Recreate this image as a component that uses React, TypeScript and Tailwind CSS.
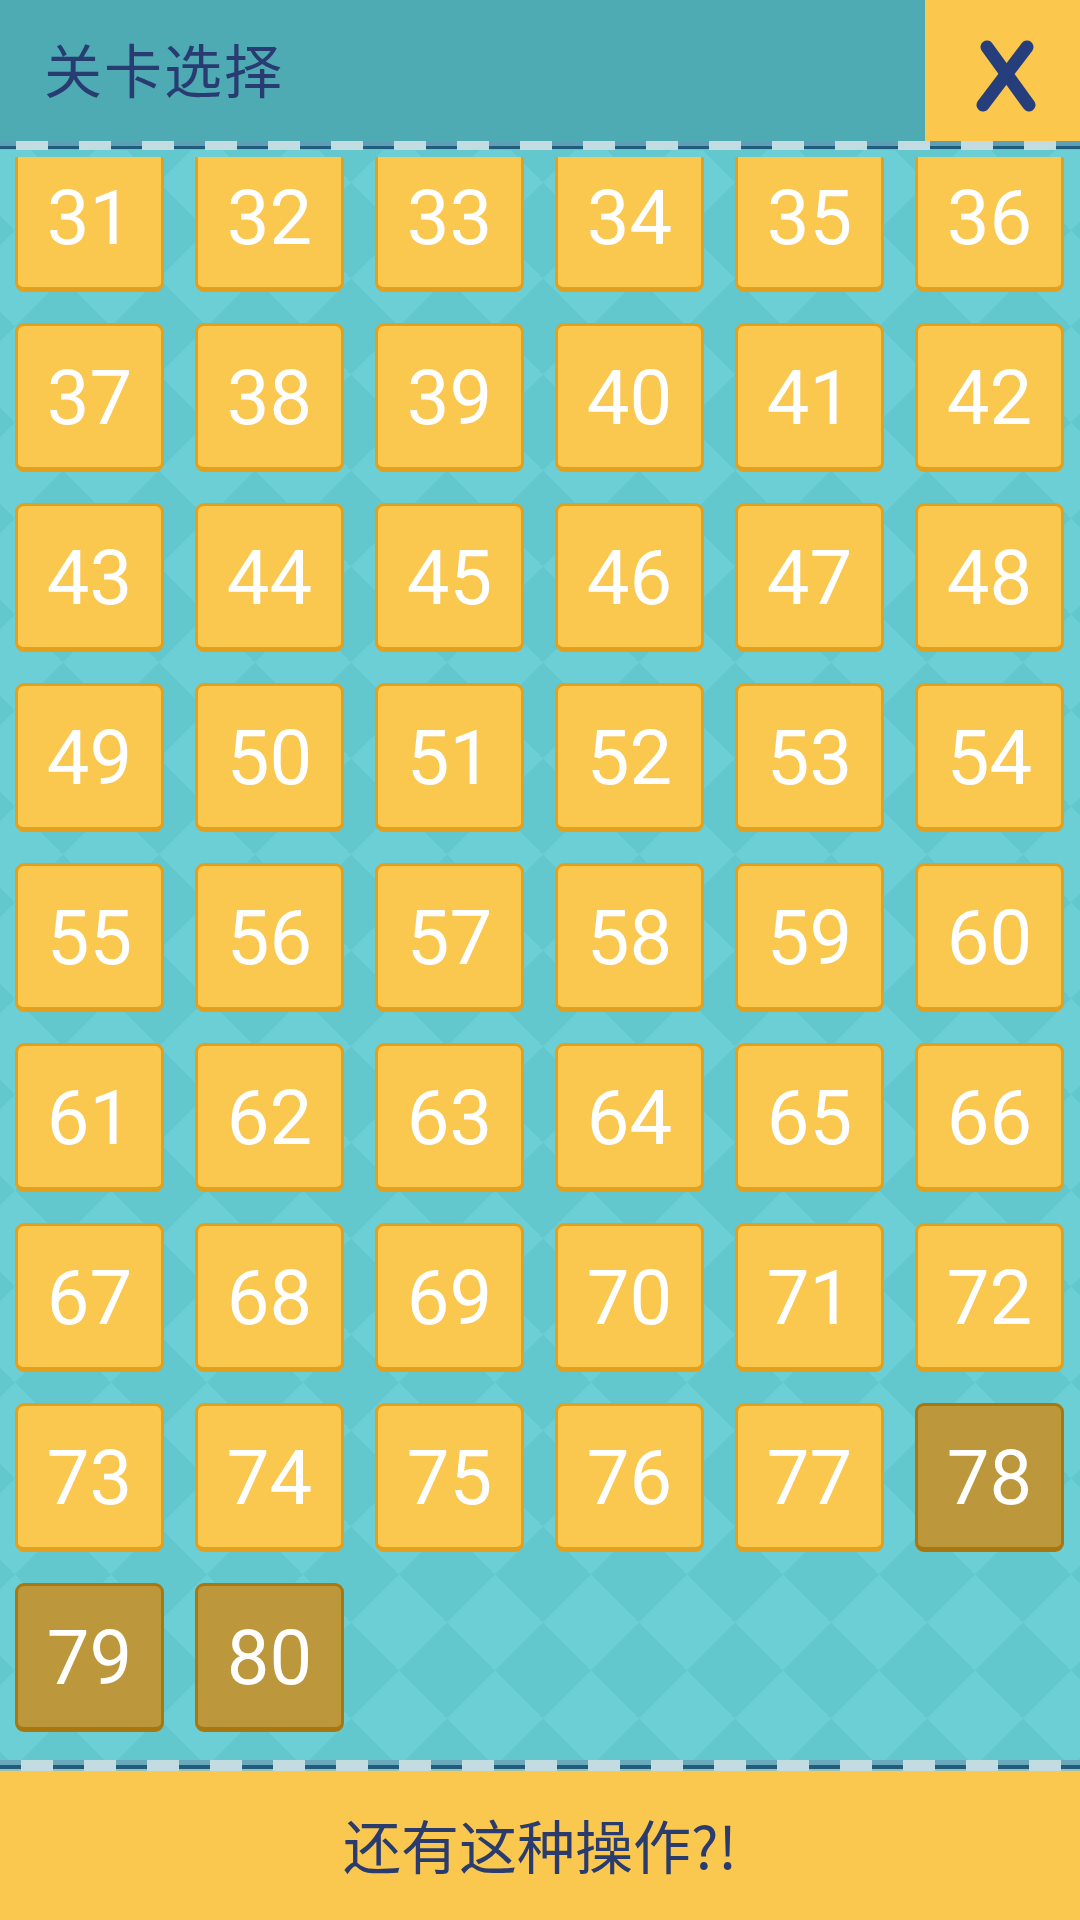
import React from "react";

const levels = Array.from({ length: 50 }, (_, i) => 31 + i);
const lockedFrom = 78;

function Dashes({ h }: { h: "top" | "bottom" }) {
  return (
    <div
      className={
        h === "top"
          ? "h-[9px] w-full shrink-0 bg-[image:repeating-linear-gradient(90deg,transparent_0_16px,#c3dce2_16px_48px,transparent_48px_63px),linear-gradient(#5c9fb6_0_50%,#205c7b_50%_90%,#7fb7c6_90%_100%)]"
          : "h-[11px] w-full shrink-0 bg-[image:repeating-linear-gradient(90deg,transparent_0_21px,#c3dce2_21px_53px,transparent_53px_63px),linear-gradient(#6aa8bc_0_50%,#205c7b_50%_85%,#9ec0b0_85%_100%)]"
      }
    />
  );
}

function Cell({ n }: { n: number }) {
  const locked = n >= lockedFrom;
  return (
    <div
      className={
        locked
          ? "h-[149px] w-[149px] rounded-[9px] border-x-[3px] border-t-[3px] border-b-[5px] border-[#a8770f] bg-[#bc973b] flex items-center justify-center"
          : "h-[149px] w-[149px] rounded-[9px] border-x-[3px] border-t-[3px] border-b-[5px] border-[#e2a01d] bg-[#fac74f] flex items-center justify-center"
      }
    >
      <span className="font-['Roboto',sans-serif] text-[76px] leading-none text-white pt-[2px]">
        {n}
      </span>
    </div>
  );
}

export default function App() {
  return (
    <div className="w-[1080px] h-[1920px] flex flex-col overflow-hidden bg-[#66cbd2]">
      <header className="h-[141px] shrink-0 flex bg-[#4eabb3]">
        <div className="flex-1 flex items-center pl-[44px] pb-[6px]">
          <span className="font-['Noto_Sans_CJK_SC',sans-serif] text-[58px] leading-none tracking-[2px] text-[#283c72]">
            关卡选择
          </span>
        </div>
        <div className="w-[155px] bg-[#fbc74d] flex items-center justify-center">
          <svg width="155" height="141" viewBox="0 0 155 141">
            <line x1="62" y1="47" x2="104" y2="105" stroke="#263e7b" strokeWidth="13" strokeLinecap="round" />
            <line x1="102" y1="47" x2="58" y2="105" stroke="#263e7b" strokeWidth="13" strokeLinecap="round" />
          </svg>
        </div>
      </header>
      <Dashes h="top" />
      <main className="flex-1 flex flex-col pt-[7px] bg-[#6ccfd6] bg-[image:linear-gradient(45deg,#63c7ce_25%,transparent_25%),linear-gradient(-45deg,#63c7ce_25%,transparent_25%),linear-gradient(45deg,transparent_75%,#63c7ce_75%),linear-gradient(-45deg,transparent_75%,#63c7ce_75%)] bg-size-[96px_96px] bg-position-[63px_80px]">
        <div className="flex-1 overflow-hidden">
          <div className="mt-[-14px] pl-[15px] grid grid-cols-[repeat(6,149px)] gap-x-[31px] gap-y-[31px]">
            {levels.map((n) => (
              <Cell key={n} n={n} />
            ))}
          </div>
        </div>
      </main>
      <Dashes h="bottom" />
      <footer className="h-[149px] shrink-0 bg-[#fbc84f] flex items-center justify-center">
        <span className="font-['Noto_Sans_CJK_SC',sans-serif] text-[58px] leading-none text-[#2a3b6e] pb-[4px]">
          还有这种操作?!
        </span>
      </footer>
    </div>
  );
}
